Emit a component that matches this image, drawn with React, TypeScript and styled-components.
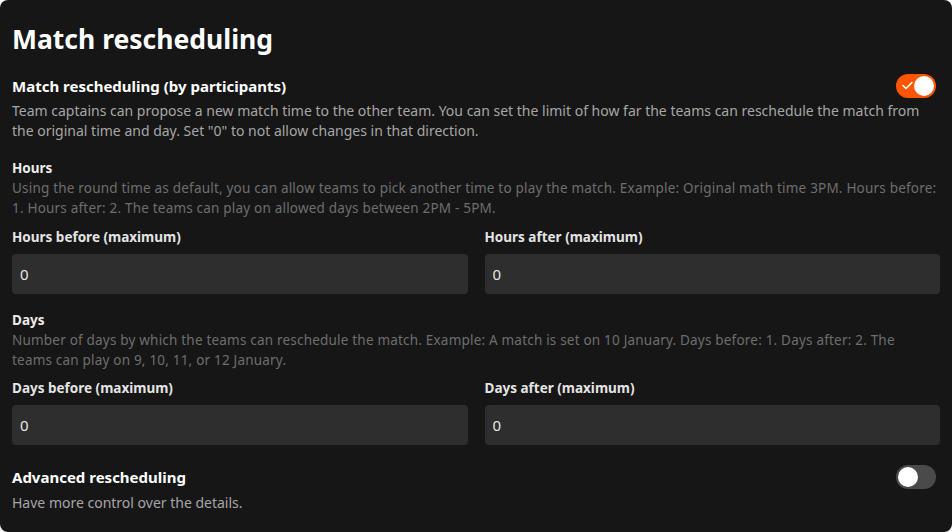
import * as React from 'react'
import styled, { createGlobalStyle } from 'styled-components'

const GlobalStyle = createGlobalStyle`
  html, body {
    margin: 0;
    padding: 0;
    background: #ffffff;
  }
  * {
    box-sizing: border-box;
  }
`

const Card = styled.div`
  width: 952px;
  height: 532px;
  background: #161616;
  border-radius: 8px;
  padding: 22px 12px 0 12px;
  font-family: 'Noto Sans', 'Liberation Sans', sans-serif;
  color: #fff;
  overflow: hidden;
`

const Title = styled.h1`
  margin: 0;
  font-size: 26.5px;
  line-height: 34px;
  font-weight: 700;
  color: #fff;
`

const SettingRow = styled.div<{ $top: number }>`
  display: flex;
  align-items: center;
  justify-content: space-between;
  height: 24px;
  margin-top: ${p => p.$top}px;
  padding-right: 4px;
`

const SettingTitle = styled.div`
  font-size: 15px;
  font-weight: 700;
  color: #fff;
`

const Description = styled.p<{ $top: number }>`
  margin: ${p => p.$top}px 0 0 0;
  font-size: 14px;
  line-height: 20px;
  color: #a6a6a6;
`

const SubHeading = styled.div<{ $top: number }>`
  margin-top: ${p => p.$top}px;
  font-size: 13.5px;
  line-height: 20px;
  font-weight: 700;
  color: #ececec;
`

const SubDescription = styled.p`
  margin: 0;
  padding-right: 3px;
  font-size: 13.5px;
  letter-spacing: 0.2px;
  line-height: 20px;
  color: #6e6e6e;
`

const FieldGrid = styled.div<{ $top: number }>`
  display: grid;
  grid-template-columns: 1fr 1fr;
  column-gap: 17px;
  margin-top: ${p => p.$top}px;
`

const Field = styled.label`
  display: flex;
  flex-direction: column;
  gap: 7px;
`

const FieldLabel = styled.span`
  font-size: 13.5px;
  line-height: 20px;
  font-weight: 700;
  color: #e4e4e4;
`

const Input = styled.input`
  height: 40px;
  width: 100%;
  border: none;
  border-radius: 4px;
  background: #2e2e2e;
  color: #e8e8e8;
  font-family: inherit;
  font-size: 15px;
  padding: 0 8px;
  outline: none;
`

const Track = styled.div<{ $on: boolean }>`
  position: relative;
  width: 40px;
  height: 24px;
  border-radius: 12px;
  background: ${p => (p.$on ? '#ff5500' : '#4a4a4a')};
  flex-shrink: 0;
`

const Knob = styled.div<{ $on: boolean }>`
  position: absolute;
  top: 2px;
  left: ${p => (p.$on ? '18px' : '2px')};
  width: 20px;
  height: 20px;
  border-radius: 50%;
  background: #fff;
`

const Check = styled.svg`
  position: absolute;
  left: 6px;
  top: 7px;
`

const Toggle = ({ on }: { on: boolean }) => (
  <Track $on={on}>
    {on && (
      <Check width="11" height="9" viewBox="0 0 11 9">
        <path d="M1 4.5 L4 7.5 L10 1.5" fill="none" stroke="#fff" strokeWidth="1.6" strokeLinecap="round" strokeLinejoin="round" />
      </Check>
    )}
    <Knob $on={on} />
  </Track>
)

export default function App() {
  return (
    <>
      <GlobalStyle />
      <Card>
        <Title>Match rescheduling</Title>

        <SettingRow $top={18}>
          <SettingTitle>Match rescheduling (by participants)</SettingTitle>
          <Toggle on />
        </SettingRow>
        <Description $top={3}>
          Team captains can propose a new match time to the other team. You can set the limit of how far the teams can
          reschedule the match from the original time and day. Set "0" to not allow changes in that direction.
        </Description>

        <SubHeading $top={17}>Hours</SubHeading>
        <SubDescription>
          Using the round time as default, you can allow teams to pick another time to play the match. Example: Original
          math time 3PM. Hours before: 1. Hours after: 2. The teams can play on allowed days between 2PM - 5PM.
        </SubDescription>
        <FieldGrid $top={9}>
          <Field>
            <FieldLabel>Hours before (maximum)</FieldLabel>
            <Input defaultValue="0" />
          </Field>
          <Field>
            <FieldLabel>Hours after (maximum)</FieldLabel>
            <Input defaultValue="0" />
          </Field>
        </FieldGrid>

        <SubHeading $top={16}>Days</SubHeading>
        <SubDescription>
          Number of days by which the teams can reschedule the match. Example: A match is set on 10 January. Days before:
          1. Days after: 2. The teams can play on 9, 10, 11, or 12 January.
        </SubDescription>
        <FieldGrid $top={8}>
          <Field>
            <FieldLabel>Days before (maximum)</FieldLabel>
            <Input defaultValue="0" />
          </Field>
          <Field>
            <FieldLabel>Days after (maximum)</FieldLabel>
            <Input defaultValue="0" />
          </Field>
        </FieldGrid>

        <SettingRow $top={20}>
          <SettingTitle>Advanced rescheduling</SettingTitle>
          <Toggle on={false} />
        </SettingRow>
        <Description $top={4}>Have more control over the details.</Description>
      </Card>
    </>
  )
}
